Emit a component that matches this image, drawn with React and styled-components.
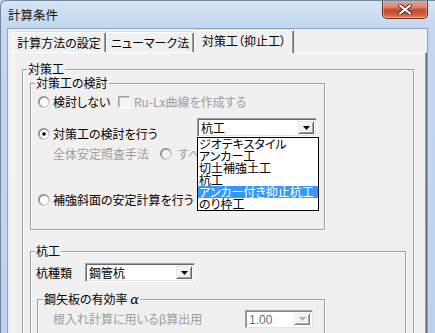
import React from 'react';
import styled, { createGlobalStyle } from 'styled-components';

const GlobalStyle = createGlobalStyle`
    html, body {
        margin: 0;
        padding: 0;
        background: #bed4ed;
    }
    body {
        font-family: "Noto Sans CJK JP", "Liberation Sans", sans-serif;
        font-size: 12px;
        font-feature-settings: "palt";
        color: #000;
    }
    * {
        box-sizing: border-box;
    }
`;

const Radio = ({ checked, disabled }) => (
    <svg width="12" height="12" viewBox="0 0 12 12">
        <defs>
            <linearGradient id="rimGrad" x1="0" y1="0" x2="1" y2="1">
                <stop offset="0" stopColor="#6e6e6e" />
                <stop offset="0.55" stopColor="#b4b4b4" />
                <stop offset="1" stopColor="#ffffff" />
            </linearGradient>
        </defs>
        <circle cx="6" cy="6" r="6" fill="url(#rimGrad)" />
        <circle cx="6" cy="6" r="4.2" fill={disabled ? '#f2f2f2' : '#fff'} />
        {checked && <circle cx="6" cy="6" r="1.8" fill="#000" />}
    </svg>
);

const Arrow = ({ disabled }) => (
    <svg width="7" height="4" viewBox="0 0 7 4">
        <polygon points="0,0 7,0 3.5,4" fill={disabled ? '#a0a0a0' : '#000'} />
    </svg>
);

const CloseGlyph = () => (
    <svg width="14" height="11" viewBox="0 0 14 11">
        <path d="M2 1.5 L12 9.5 M12 1.5 L2 9.5" stroke="#4a2a25" strokeWidth="4" strokeLinecap="round" />
        <path d="M2 1.5 L12 9.5 M12 1.5 L2 9.5" stroke="#fff" strokeWidth="2.2" strokeLinecap="round" />
    </svg>
);

const pileTypes = ['ジオテキスタイル', 'アンカー工', '切土補強土工', '杭工', 'アンカー付き抑止杭工', 'のり枠工'];

const App = () => {
    return (
        <Window>
            <GlobalStyle />
            <TitleBar>
                <Title>計算条件</Title>
                <CloseButton><CloseGlyph /></CloseButton>
            </TitleBar>
            <Client>
                <Tabs>
                    <Tab $w={94}>計算方法の設定</Tab>
                    <Tab $w={88}>ニューマーク法</Tab>
                    <Tab $w={100} $active>対策工（抑止工）</Tab>
                </Tabs>
                <Panel>
                    <Group $pad="13px 7px 40px 7px">
                        <Caption>対策工</Caption>
                        <Group $w={295} $pad="10px 0 21px 7px">
                            <Caption>対策工の検討</Caption>
                            <Row $cols="80px auto">
                                <Option><Radio />検討しない</Option>
                                <Option $disabled><CheckBox />Ru-Lx曲線を作成する</Option>
                            </Row>
                            <Row $cols="159px auto" $h={24} $mt={8}>
                                <Option $end><Radio checked />対策工の検討を行う</Option>
                                <ComboWrap>
                                    <Combo $w={120}>
                                        <ComboValue>杭工</ComboValue>
                                        <DropButton><Arrow /></DropButton>
                                    </Combo>
                                    <DropList>
                                        {pileTypes.map((t, i) => (
                                            <DropItem key={t} $selected={i === 4}>{t}</DropItem>
                                        ))}
                                    </DropList>
                                </ComboWrap>
                            </Row>
                            <Row $cols="107px auto" $mt={4} $indent={15}>
                                <Text $disabled>全体安定照査手法</Text>
                                <Option $disabled $gap={6}><Radio disabled />すべり面形状</Option>
                            </Row>
                            <Row $mt={30}>
                                <Option><Radio />補強斜面の安定計算を行う</Option>
                            </Row>
                        </Group>
                        <Group $mt={21} $pad="11px 0 20px 5px">
                            <Caption>杭工</Caption>
                            <Row $cols="49px auto" $h={19}>
                                <Text>杭種類</Text>
                                <Combo $w={110}>
                                    <ComboValue>鋼管杭</ComboValue>
                                    <DropButton><Arrow /></DropButton>
                                </Combo>
                            </Row>
                            <Group $w={288} $mt={17} $ml={1} $pad="10px 0 10px 15px">
                                <Caption $x={5}>鋼矢板の有効率 <Greek>α</Greek></Caption>
                                <Row $cols="192px auto" $h={18}>
                                    <Text $disabled>根入れ計算に用いるβ算出用</Text>
                                    <Combo $w={68} $h={18} $disabled>
                                        <ComboValue $disabled>1.00</ComboValue>
                                        <DropButton $disabled><Arrow disabled /></DropButton>
                                    </Combo>
                                </Row>
                            </Group>
                        </Group>
                    </Group>
                </Panel>
            </Client>
        </Window>
    );
};

export default App;


const Window = styled.div`
    width: 435px;
    height: 333px;
    overflow: hidden;
    display: flex;
    flex-direction: column;
    background: linear-gradient(#d5e4f5 0px, #c3d8ef 26px, #bcd2ec 100%);
    border-left: 1px solid #71869f;
    border-top: 1px solid #71869f;
    border-top-left-radius: 6px;
`;

const TitleBar = styled.div`
    height: 27px;
    flex: none;
    display: flex;
    align-items: flex-start;
    justify-content: space-between;
    padding: 0 7px 0 7px;
`;

const Title = styled.div`
    margin-top: 7px;
    line-height: 14px;
    font-size: 12.5px;
    font-feature-settings: normal;
    color: #111;
`;

const CloseButton = styled.div`
    width: 46px;
    height: 19px;
    margin-top: -1px;
    display: flex;
    align-items: center;
    justify-content: center;
    border: 1px solid #6b2a20;
    border-top: none;
    border-radius: 0 0 5px 5px;
    background: linear-gradient(#e9a898 0%, #dc826c 40%, #c4482f 55%, #cf5a3c 80%, #e0876a 100%);
    box-shadow: inset 0 0 0 1px rgba(255, 255, 255, 0.35);
`;

const Client = styled.div`
    flex: 1;
    margin: 0 7px 0 6px;
    padding: 1px 0 0 4px;
    background: #f0f0f0;
    border: 1px solid #8ea3bd;
    border-bottom: none;
    display: flex;
    flex-direction: column;
`;

const Tabs = styled.div`
    display: flex;
    align-items: flex-end;
    height: 22px;
`;

const Tab = styled.div`
    width: ${p => p.$w}px;
    height: ${p => (p.$active ? 23 : 20)}px;
    margin-bottom: ${p => (p.$active ? -1 : 0)}px;
    padding-top: 3px;
    text-align: center;
    line-height: 14px;
    white-space: nowrap;
    background: #f0f0f0;
    border-top: 1px solid #fff;
    border-left: 1px solid #fff;
    border-right: 1px solid #696969;
    box-shadow: inset -1px 0 0 #a0a0a0, 0 -1px 0 #dcdcdc;
    border-radius: 2px 2px 0 0;
    position: ${p => (p.$active ? 'relative' : 'static')};
    z-index: ${p => (p.$active ? 2 : 'auto')};
`;

const Panel = styled.div`
    flex: 1;
    padding: 16px 12px 0 9px;
    border-top: 1px solid #fff;
    border-left: 1px solid #fff;
    border-right: 1px solid #696969;
    box-shadow: inset -1px 0 0 #a0a0a0;
`;

const Group = styled.div`
    position: relative;
    width: ${p => (p.$w ? `${p.$w}px` : 'auto')};
    margin: ${p => p.$mt || 0}px 0 0 ${p => p.$ml || 0}px;
    padding: ${p => p.$pad};
    border: 1px solid #a0a0a0;
    box-shadow: inset 1px 1px 0 #fff, 1px 1px 0 #fff;
`;

const Caption = styled.span`
    position: absolute;
    top: -8px;
    left: ${p => p.$x || 4}px;
    padding: 0 1px;
    line-height: 14px;
    background: #f0f0f0;
    white-space: nowrap;
`;

const Greek = styled.i`
    font-family: "DejaVu Serif", "Liberation Serif", serif;
    font-size: 13px;
`;

const Row = styled.div`
    display: grid;
    grid-template-columns: ${p => p.$cols || 'auto'};
    justify-content: start;
    align-items: center;
    height: ${p => p.$h || 16}px;
    margin-top: ${p => p.$mt || 0}px;
    padding-left: ${p => p.$indent || 0}px;
`;

const Option = styled.div`
    display: flex;
    align-items: center;
    gap: ${p => p.$gap || 3}px;
    height: 16px;
    line-height: 14px;
    white-space: nowrap;
    align-self: ${p => (p.$end ? 'end' : 'center')};
    color: ${p => (p.$disabled ? '#9d9d9d' : '#000')};

    svg {
        flex: none;
    }
`;

const Text = styled.span`
    line-height: 14px;
    white-space: nowrap;
    color: ${p => (p.$disabled ? '#9d9d9d' : '#000')};
`;

const CheckBox = styled.span`
    width: 12px;
    height: 12px;
    margin-right: 1px;
    flex: none;
    border: 1px solid;
    border-color: #a0a0a0 #fff #fff #a0a0a0;
    box-shadow: inset 1px 1px 0 #c4c4c4;
    background: #f4f4f4;
`;

const ComboWrap = styled.div`
    position: relative;
    align-self: start;
`;

const Combo = styled.div`
    display: flex;
    width: ${p => p.$w}px;
    height: ${p => p.$h || 19}px;
    padding: 2px;
    background: #fff;
    border: 1px solid;
    border-color: ${p => (p.$disabled ? '#a0a0a0 #e3e3e3 #e3e3e3 #a0a0a0' : '#a0a0a0 #fff #fff #a0a0a0')};
    box-shadow: ${p => (p.$disabled ? 'inset 1px 1px 0 #8a8a8a' : 'inset 1px 1px 0 #696969, inset -1px -1px 0 #e3e3e3')};
`;

const ComboValue = styled.span`
    flex: 1;
    padding-left: 1px;
    line-height: 14px;
    white-space: nowrap;
    color: ${p => (p.$disabled ? '#6d6d6d' : '#000')};
    font-family: ${p => (p.$disabled ? '"Liberation Sans", sans-serif' : 'inherit')};
`;

const DropButton = styled.span`
    width: 16px;
    display: flex;
    align-items: center;
    justify-content: center;
    background: #f0f0f0;
    border: 1px solid;
    border-color: #e3e3e3 #696969 #696969 #e3e3e3;
    box-shadow: inset 1px 1px 0 #fff, inset -1px -1px 0 #a0a0a0;
    opacity: ${p => (p.$disabled ? 0.85 : 1)};
`;

const DropList = styled.div`
    position: absolute;
    top: 100%;
    left: 0;
    z-index: 3;
    width: 122px;
    background: #fff;
    border: 1px solid #000;
`;

const DropItem = styled.div`
    height: 12px;
    line-height: 12px;
    padding-left: 1px;
    white-space: nowrap;
    overflow: hidden;
    background: ${p => (p.$selected ? '#3399ff' : 'transparent')};
    color: ${p => (p.$selected ? '#fff' : '#000')};
`;
